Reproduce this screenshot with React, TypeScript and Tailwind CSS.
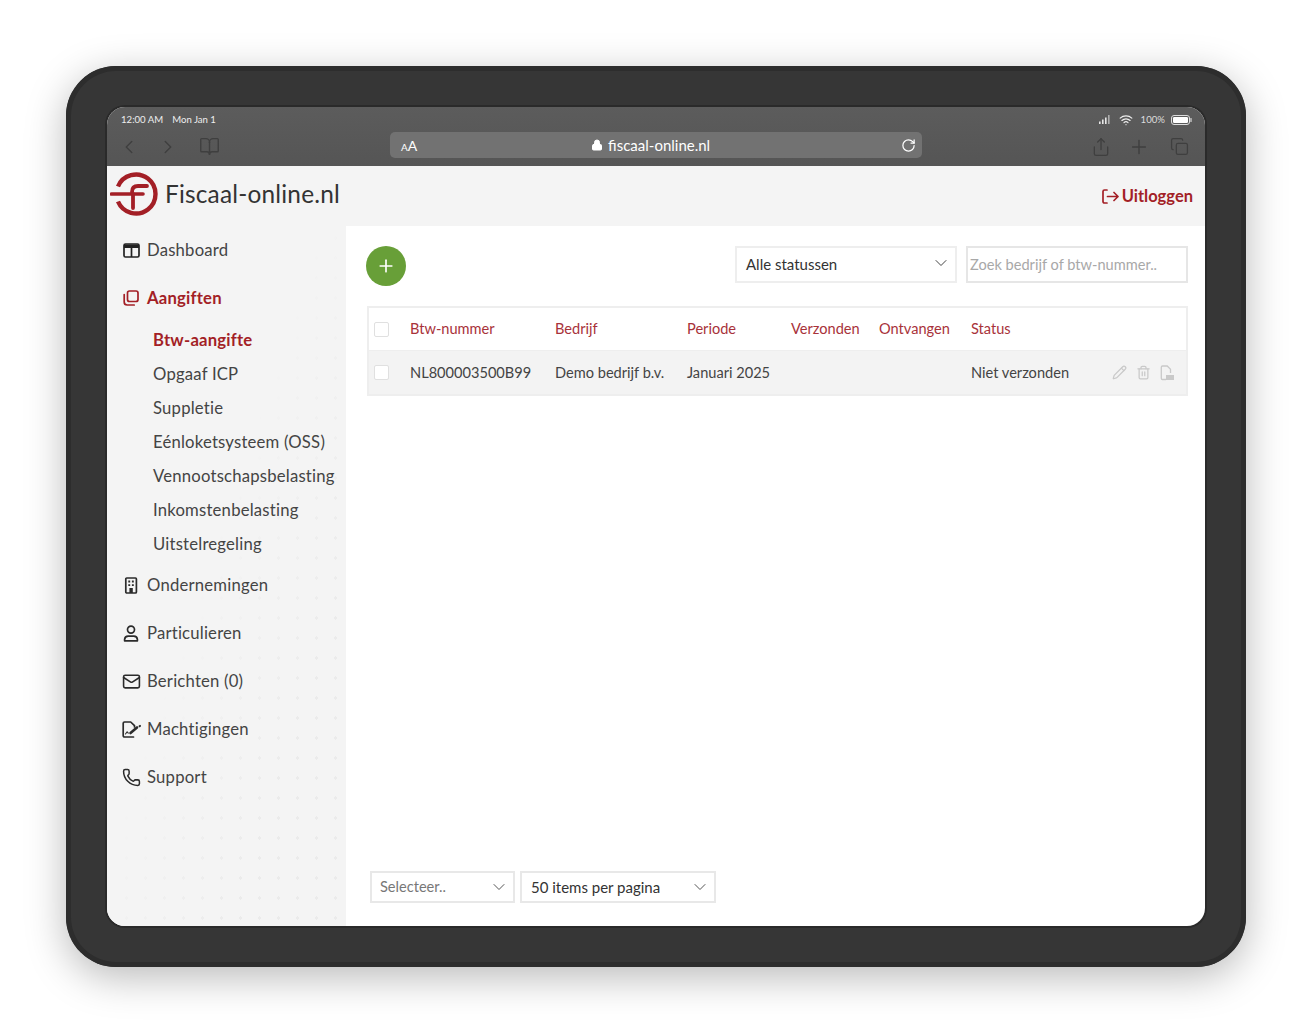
import React from "react";
import { ChevronDown, ChevronLeft, ChevronRight, BookOpen, Lock, RotateCw, Share, Plus, Copy, Wifi, Mail, Phone, Pencil, Trash2 } from "lucide-react";

const F = "[font-family:Lato,'Noto_Sans',sans-serif]";

function Logo() {
  return (
    <svg width="48" height="44" viewBox="0 0 48 44" fill="none" className="shrink-0">
      <path d="M8 14.5 A19.5 19.5 0 1 1 8 29.5" stroke="#a31f26" strokeWidth="4.4" />
      <path d="M1.5 22 H33" stroke="#a31f26" strokeWidth="3.6" strokeLinecap="round" />
      <path d="M23 36 V22 M22 20 Q22 14 28 14 H37" stroke="#a31f26" strokeWidth="3.8" strokeLinecap="round" />
    </svg>
  );
}

function DashIcon() {
  return (
    <svg width="17" height="15" viewBox="0 0 17 15" fill="none" className="shrink-0">
      <rect x="1" y="1" width="15" height="13" rx="1.5" stroke="#222" strokeWidth="1.7" />
      <path d="M1 1.5h15V5H1z" fill="#222" />
      <path d="M8.5 4v10" stroke="#222" strokeWidth="1.7" />
    </svg>
  );
}

function StackIcon() {
  return (
    <svg width="16" height="16" viewBox="0 0 16 16" fill="none" stroke="#a31f26" strokeWidth="1.7" className="shrink-0">
      <rect x="4.5" y="1" width="10.5" height="10.5" rx="2" />
      <path d="M1.2 4.5v7.5a3 3 0 0 0 3 3h7" strokeLinecap="round" />
    </svg>
  );
}

function BuildingIcon() {
  return (
    <svg width="14" height="17" viewBox="0 0 14 17" fill="none" className="shrink-0">
      <rect x="1.8" y="1" width="10.6" height="15" rx="1" stroke="#2b2b2b" strokeWidth="1.7" />
      <path d="M4.3 3.6h1.9v1.9H4.3zM7.9 3.6h1.9v1.9H7.9zM4.3 7.2h1.9v1.9H4.3zM7.9 7.2h1.9v1.9H7.9zM5.4 11h3.4v5H5.4z" fill="#2b2b2b" />
    </svg>
  );
}

function UserIcon() {
  return (
    <svg width="16" height="17" viewBox="0 0 16 17" fill="none" stroke="#2b2b2b" strokeWidth="1.7" className="shrink-0">
      <circle cx="8" cy="4.6" r="3.5" />
      <path d="M1.6 15.8v-1.4a3.6 3.6 0 0 1 3.6-3.3h5.6a3.6 3.6 0 0 1 3.6 3.3v1.4z" strokeLinejoin="round" />
    </svg>
  );
}

function SignIcon() {
  return (
    <svg width="19" height="17" viewBox="0 0 19 17" fill="none" stroke="#2b2b2b" strokeWidth="1.7" strokeLinecap="round" strokeLinejoin="round" className="ml-[1px] shrink-0">
      <path d="M11.5 16H2.5A1.3 1.3 0 0 1 1.2 14.7V2.3A1.3 1.3 0 0 1 2.5 1h6.2l3.8 3.6V6" />
      <path d="M8.5 12 15 6.5" strokeWidth="2.6" />
      <path d="M17.6 5.3l.4-.4" strokeWidth="2" />
      <path d="M3.5 13l1.6-2.2 1.2 1.4" strokeWidth="1.1" />
    </svg>
  );
}

function LogoutIcon() {
  return (
    <svg width="17" height="15" viewBox="0 0 17 15" fill="none" stroke="#a31f26" strokeWidth="1.7" strokeLinecap="round" strokeLinejoin="round">
      <path d="M5 1H2.5A1.5 1.5 0 0 0 1 2.5v10A1.5 1.5 0 0 0 2.5 14H5" />
      <path d="M5.5 7.5H16M12 3.5l4 4-4 4" />
    </svg>
  );
}

function Signal() {
  return (
    <svg width="11" height="9" viewBox="0 0 11 9" fill="#e6e6e6">
      <rect x="0" y="6.5" width="1.6" height="2.5" />
      <rect x="3" y="4.5" width="1.6" height="4.5" />
      <rect x="6" y="2.5" width="1.6" height="6.5" />
      <rect x="9" y="0" width="1.6" height="9" opacity=".6" />
    </svg>
  );
}

function Battery() {
  return (
    <svg width="21" height="10" viewBox="0 0 21 10" fill="none" className="ml-[6px]">
      <rect x=".5" y=".5" width="18" height="9" rx="2.5" stroke="#ddd" />
      <rect x="2" y="2" width="15" height="6" rx="1.2" fill="#fff" />
      <path d="M20 3.5v3" stroke="#ddd" strokeWidth="1.2" strokeLinecap="round" />
    </svg>
  );
}

function PdfIcon() {
  return (
    <svg width="14" height="16" viewBox="0 0 14 16" fill="none" stroke="#c9c9c9" strokeWidth="1.3">
      <path d="M6 14.5H2.5A1.2 1.2 0 0 1 1.3 13.3V2.2A1.2 1.2 0 0 1 2.5 1h4.7L10.5 4.3V8" />
      <rect x="6" y="10" width="8" height="5" fill="#c9c9c9" stroke="none" />
    </svg>
  );
}

function MainItem({ icon, label, active }: { icon: React.ReactNode; label: string; active?: boolean }) {
  return (
    <div className={`flex h-12 items-center gap-2 pl-4 text-[16.7px] tracking-[0.2px] ${active ? "font-bold text-[#a31f26]" : "text-[#444]"}`}>
      <span className="mb-[2px] flex w-[16px] justify-center">{icon}</span>
      <span>{label}</span>
    </div>
  );
}

function SubItem({ label, active }: { label: string; active?: boolean }) {
  return (
    <div className={`flex h-[34px] items-center pl-[46px] text-[16.7px] tracking-[0.2px] ${active ? "font-bold text-[#a31f26]" : "text-[#444]"}`}>
      {label}
    </div>
  );
}

function Box() {
  return <span className="block h-[15px] w-[15px] rounded-[2px] border border-[#e0e0e0] bg-white" />;
}

const cols = "grid grid-cols-[41px_145px_132px_104px_88px_92px_141px_1fr] items-center";

export default function App() {
  return (
    <div className={`h-[1033px] bg-white p-[66px] ${F}`}>
      <div className="h-[901px] rounded-[50px] bg-[#363636] p-[41px] shadow-[0_10px_40px_rgba(0,0,0,0.28),inset_0_0_0_5px_#2d2d2d]">
        <div className="flex h-[819px] flex-col overflow-hidden rounded-[18px] bg-white ring-2 ring-[#2a2a2a]">
          {/* browser bar */}
          <div className="h-[59px] shrink-0 bg-gradient-to-b from-[#5c5c5c] to-[#555] pl-[14px] pr-[13px]">
            <div className="flex h-6 items-center justify-between pt-[2px] text-[9.6px] text-[#eee]">
              <div className="flex gap-[9px]">
                <span>12:00 AM</span>
                <span>Mon Jan 1</span>
              </div>
              <div className="flex items-center">
                <Signal />
                <Wifi size={14} color="#eee" className="ml-[9px]" />
                <span className="ml-[8px] text-[#ddd]">100%</span>
                <Battery />
              </div>
            </div>
            <div className="flex h-[28px] items-center">
              <ChevronLeft size={22} color="#3f3f3f" strokeWidth={1.6} className="-ml-[3px] mt-[3px]" />
              <ChevronRight size={22} color="#3f3f3f" strokeWidth={1.6} className="ml-[17px] mt-[3px]" />
              <BookOpen size={21} color="#3f3f3f" strokeWidth={1.6} className="ml-[20px] mt-[3px]" />
              <div className="ml-[170px] flex h-[26px] w-[532px] items-center justify-between rounded-[5px] bg-[#727272] pl-[11px] pr-[6px] text-white">
                <span className="text-[14px]"><span className="text-[10px]">A</span>A</span>
                <span className="mr-[17px] flex items-center gap-[5px] text-[15px]">
                  <Lock size={12} fill="#fff" color="#fff" />
                  fiscaal-online.nl
                </span>
                <RotateCw size={15} color="#fff" />
              </div>
              <div className="ml-auto mr-[3px] mt-[3px] flex items-center">
                <Share size={20} color="#3f3f3f" strokeWidth={1.6} />
                <Plus size={22} color="#3f3f3f" strokeWidth={1.6} className="ml-[17px]" />
                <Copy size={19} color="#3f3f3f" strokeWidth={1.6} className="ml-[20px]" />
              </div>
            </div>
          </div>
          {/* header */}
          <div className="flex h-[60px] shrink-0 items-center justify-between bg-[#f4f4f4] pl-[3px] pr-3">
            <div className="-mt-[4px] flex items-center gap-[7px]">
              <Logo />
              <span className="text-[24.4px] tracking-[0.2px] text-[#333]">Fiscaal-online.nl</span>
            </div>
            <div className="mt-[1px] flex items-center gap-[3px] text-[16.5px] font-bold text-[#a31f26]">
              <LogoutIcon />
              Uitloggen
            </div>
          </div>
          <div className="flex min-h-0 flex-1">
            {/* sidebar */}
            <div className="relative w-[239px] shrink-0 bg-[#f4f4f4]">
              <div className="absolute inset-0 bg-[radial-gradient(circle,#ebebeb_1.5px,transparent_1.8px)] bg-[length:19px_20px] bg-[position:10px_2px] [mask-image:linear-gradient(to_bottom_right,transparent_45%,black_75%)]" />
              <div className="relative pt-[1px]">
                <MainItem icon={<DashIcon />} label="Dashboard" />
                <MainItem icon={<StackIcon />} label="Aangiften" active />
                <div className="pt-[1px]">
                  <SubItem label="Btw-aangifte" active />
                  <SubItem label="Opgaaf ICP" />
                  <SubItem label="Suppletie" />
                  <SubItem label="Eénloketsysteem (OSS)" />
                  <SubItem label="Vennootschapsbelasting" />
                  <SubItem label="Inkomstenbelasting" />
                  <SubItem label="Uitstelregeling" />
                </div>
                <MainItem icon={<BuildingIcon />} label="Ondernemingen" />
                <MainItem icon={<UserIcon />} label="Particulieren" />
                <MainItem icon={<Mail size={19} color="#2b2b2b" strokeWidth={2} className="shrink-0" />} label="Berichten (0)" />
                <MainItem icon={<SignIcon />} label="Machtigingen" />
                <MainItem icon={<Phone size={19} color="#2b2b2b" strokeWidth={1.9} className="shrink-0" />} label="Support" />
              </div>
            </div>
            {/* main */}
            <div className="flex min-w-0 flex-1 flex-col pb-[23px] pl-[20px] pr-[17px] pt-[20px]">
              <div className="flex items-start">
                <button className="flex h-10 w-10 items-center justify-center rounded-full bg-[#689f38]">
                  <Plus size={20} color="#fff" strokeWidth={2} />
                </button>
                <div className="ml-auto flex h-[37px] w-[222px] items-center justify-between border-2 border-[#eeeeee] pl-[9px] pr-[4px] text-[15px] text-[#333]">
                  Alle statussen
                  <ChevronDown size={20} color="#444" strokeWidth={1.2} className="-mt-[3px]" />
                </div>
                <div className="ml-[9px] flex h-[37px] w-[222px] items-center border-2 border-[#e6e6e6] pl-[2px] text-[14.6px] text-[#a8a8a8]">
                  Zoek bedrijf of btw-nummer..
                </div>
              </div>
              <div className="ml-[1px] mt-[20px] border-2 border-[#eeeeee] text-[14.6px]">
                <div className={`${cols} h-[42px] text-[#a8323a]`}>
                  <span className="pl-[5px]"><Box /></span>
                  <span>Btw-nummer</span>
                  <span>Bedrijf</span>
                  <span>Periode</span>
                  <span>Verzonden</span>
                  <span>Ontvangen</span>
                  <span>Status</span>
                  <span />
                </div>
                <div className={`${cols} h-[44px] border-t border-[#eeeeee] bg-[#f3f3f3] text-[#444]`}>
                  <span className="pl-[5px]"><Box /></span>
                  <span>NL800003500B99</span>
                  <span>Demo bedrijf b.v.</span>
                  <span>Januari 2025</span>
                  <span />
                  <span />
                  <span>Niet verzonden</span>
                  <span className="flex items-center justify-end gap-[9px] pr-[13px]">
                    <Pencil size={15} color="#c9c9c9" />
                    <Trash2 size={15} color="#c9c9c9" />
                    <PdfIcon />
                  </span>
                </div>
              </div>
              <div className="ml-[4px] mt-auto flex gap-[5px]">
                <div className="flex h-[32px] w-[145px] items-center justify-between border-2 border-[#e8e8e8] pl-[8px] pr-[4px] text-[14.6px] text-[#777]">
                  Selecteer..
                  <ChevronDown size={20} color="#555" strokeWidth={1.2} />
                </div>
                <div className="flex h-[32px] w-[196px] items-center justify-between border-2 border-[#e8e8e8] pl-[9px] pr-[4px] text-[15px] text-[#333]">
                  50 items per pagina
                  <ChevronDown size={20} color="#555" strokeWidth={1.2} />
                </div>
              </div>
            </div>
          </div>
        </div>
      </div>
    </div>
  );
}
